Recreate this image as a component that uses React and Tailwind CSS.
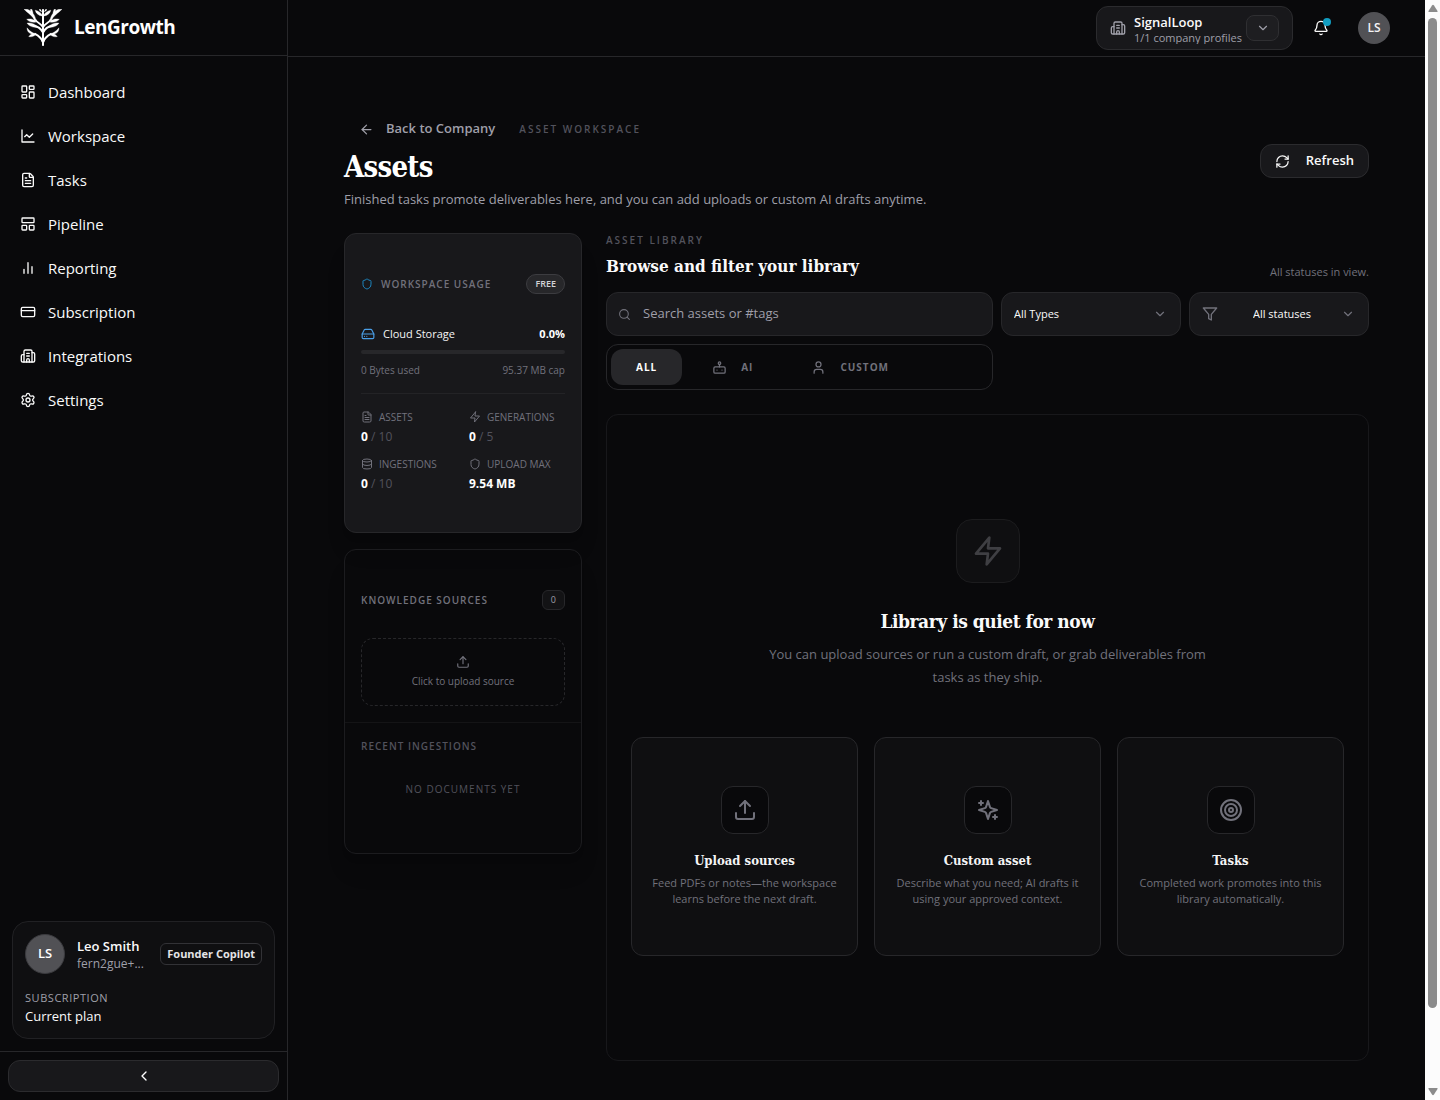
import React, { useState } from 'react';
import {
  ArrowLeft, Bell, Building2, ChevronDown, ChevronLeft, CreditCard, Database, FileText,
  HardDrive, LayoutDashboard, LayoutPanelTop, RefreshCw, Search, Settings, Shield, Target, Upload, User,
} from 'lucide-react';

// Shared wrapper for the icons that lucide does not ship in this shape
function Glyph({ size = 16, strokeWidth = 2, className, children }) {
  return (
    <svg
      width={size}
      height={size}
      viewBox="0 0 24 24"
      fill="none"
      stroke="currentColor"
      strokeWidth={strokeWidth}
      strokeLinecap="round"
      strokeLinejoin="round"
      className={className}
      aria-hidden="true"
    >
      {children}
    </svg>
  );
}

const LineChart = (props) => (
  <Glyph {...props}>
    <path d="M3 3v18h18" />
    <path d="m19 9-5 5-4-4-3 3" />
  </Glyph>
);

const Bars = (props) => (
  <Glyph {...props}>
    <path d="M18 20V10M12 20V4M6 20v-6" />
  </Glyph>
);

const Zap = (props) => (
  <Glyph {...props}>
    <path d="M13 2 3 14h9l-1 8 10-12h-9l1-8z" />
  </Glyph>
);

const Filter = (props) => (
  <Glyph {...props}>
    <path d="M22 3H2l8 9.460V19l4 2v-8.540L22 3z" />
  </Glyph>
);

const Robot = (props) => (
  <Glyph {...props}>
    <rect width="18" height="10" x="3" y="11" rx="2" />
    <circle cx="12" cy="5" r="2" />
    <path d="M12 7v4M8 16h.01M16 16h.01" />
  </Glyph>
);

const Sparkles = (props) => (
  <Glyph {...props}>
    <path d="m12 3-1.912 5.813a2 2 0 0 1-1.275 1.275L3 12l5.813 1.912a2 2 0 0 1 1.275 1.275L12 21l1.912-5.813a2 2 0 0 1 1.275-1.275L21 12l-5.813-1.912a2 2 0 0 1-1.275-1.275L12 3Z" />
    <path d="M5 3v4M19 17v4M3 5h4M17 19h4" />
  </Glyph>
);

function Logo() {
  const half = (
    <>
      <path d="M55 97C52 86 44 79 32 73" strokeWidth="6" />
      <path d="M34 71C26 70 18 74 14 81C23 83 31 79 36 74Z" fill="currentColor" strokeWidth="1" />
      <path d="M37 75C28 71 17 66 9 55C9 65 13 71 23 73Z" fill="currentColor" strokeWidth="1" />
      <path d="M55 68C50 55 38 50 26 48" strokeWidth="6" />
      <path d="M40 54C30 54 15 52 9 41C20 39 31 43 38 50Z" fill="currentColor" strokeWidth="1" />
      <path d="M55 52C50 42 38 41 33 30" strokeWidth="5" />
      <path d="M36 38C26 40 14 37 8 30C17 27 26 29 33 34Z" fill="currentColor" strokeWidth="1" />
      <path d="M31 35C28 20 12 13 0 0H10C22 5 32 15 35 32Z" fill="currentColor" strokeWidth="1" />
      <path d="M24 14C20 10 19 5 19 0H23C25 5 27 9 26 13Z" fill="currentColor" strokeWidth="1" />
      <path d="M53 20C43 19 35 12 33 3C43 5 51 11 54 18Z" fill="currentColor" strokeWidth="1" />
      <path d="M44 0H49L53 8C48 7 45 4 44 0Z" fill="currentColor" strokeWidth="0" />
    </>
  );
  return (
    <svg width="38" height="37" viewBox="0 0 112 108" fill="none" stroke="currentColor" aria-hidden="true">
      <g>{half}</g>
      <g transform="translate(112 0) scale(-1 1)">{half}</g>
      <path d="M56 0V108" strokeWidth="6" />
    </svg>
  );
}

const navItems = [
  { label: 'Dashboard', icon: LayoutDashboard },
  { label: 'Workspace', icon: LineChart },
  { label: 'Tasks', icon: FileText },
  { label: 'Pipeline', icon: LayoutPanelTop },
  { label: 'Reporting', icon: Bars },
  { label: 'Subscription', icon: CreditCard },
  { label: 'Integrations', icon: Building2 },
  { label: 'Settings', icon: Settings },
];

const usageStats = [
  { label: 'ASSETS', icon: FileText, value: '0', cap: '10' },
  { label: 'GENERATIONS', icon: Zap, value: '0', cap: '5' },
  { label: 'INGESTIONS', icon: Database, value: '0', cap: '10' },
  { label: 'UPLOAD MAX', icon: Shield, value: '9.54 MB' },
];

const starters = [
  { title: 'Upload sources', icon: Upload, text: 'Feed PDFs or notes—the workspace learns before the next draft.' },
  { title: 'Custom asset', icon: Sparkles, text: 'Describe what you need; AI drafts it using your approved context.' },
  { title: 'Tasks', icon: Target, text: 'Completed work promotes into this library automatically.' },
];

const tabs = [
  { id: 'all', label: 'ALL' },
  { id: 'ai', label: 'AI', icon: Robot },
  { id: 'custom', label: 'CUSTOM', icon: User },
];

function Sidebar() {
  return (
    <aside className="sticky top-0 flex h-screen w-72 shrink-0 flex-col border-r border-[#27272a]">
      <div className="flex h-14 items-center gap-3 border-b border-[#27272a] pl-6 text-white">
        <Logo />
        <span className="text-[19px] font-bold tracking-tight">LenGrowth</span>
      </div>

      <nav className="flex flex-1 flex-col gap-1 px-2 py-4">
        {navItems.map(({ label, icon: Icon }) => (
          <a key={label} href="#" className="flex h-10 items-center gap-3 px-3 text-[15px] font-medium text-zinc-50">
            <Icon size={16} />
            {label}
          </a>
        ))}
      </nav>

      <div className="mx-3 mb-3 rounded-2xl border border-[#212124] bg-[#0f0f11] p-3">
        <div className="flex items-center gap-3">
          <div className="flex size-10 shrink-0 items-center justify-center rounded-full border border-[#3a3a3e] bg-[#515155] text-[13px] font-semibold text-white">
            LS
          </div>
          <div className="min-w-0 flex-1">
            <p className="text-[13px] leading-5 font-semibold whitespace-nowrap text-zinc-50">Leo Smith</p>
            <p className="text-xs leading-4 text-zinc-400">fern2gue+...</p>
          </div>
          <span className="shrink-0 rounded-md border border-[#323236] px-1.5 text-[11px] leading-5 font-bold text-zinc-200">
            Founder Copilot
          </span>
        </div>
        <p className="mt-4 text-[11px] leading-4 tracking-wider text-zinc-400">SUBSCRIPTION</p>
        <p className="text-[13px] leading-5 font-medium text-zinc-50">Current plan</p>
      </div>

      <div className="border-t border-[#27272a] p-2">
        <button
          type="button"
          aria-label="Collapse sidebar"
          className="flex h-8 w-full items-center justify-center rounded-xl border border-[#2b2b2e] bg-[#18181b] text-white"
        >
          <ChevronLeft size={16} />
        </button>
      </div>
    </aside>
  );
}

function TopBar() {
  return (
    <header className="flex h-[57px] items-center justify-end border-b border-[#27272a] pr-[35px]">
      <div className="flex h-11 items-center rounded-xl border border-[#2b2b2e] bg-[#18181b] px-[13px]">
        <Building2 size={16} className="mr-2 text-zinc-400" />
        <div className="h-8 overflow-hidden">
          <p className="text-[13px] leading-5 font-semibold text-zinc-50">SignalLoop</p>
          <p className="text-[11px] leading-3 text-zinc-400">1/1 company profiles</p>
        </div>
        <button
          type="button"
          aria-label="Switch company"
          className="ml-1 flex h-[26px] w-[33px] items-center justify-center rounded-lg border border-[#2f2f32] bg-[#1e1e21] text-zinc-400"
        >
          <ChevronDown size={14} />
        </button>
      </div>
      <button type="button" aria-label="Notifications" className="relative ml-5 text-zinc-50">
        <Bell size={16} />
        <span className="absolute -top-0.5 -right-0.5 size-2 rounded-full bg-[#119cc0]" />
      </button>
      <button
        type="button"
        className="ml-[29px] flex size-8 items-center justify-center rounded-full bg-[#515155] text-xs font-semibold text-zinc-100"
      >
        LS
      </button>
    </header>
  );
}

function UsageCard() {
  return (
    <section className="rounded-xl border border-[#27272a] bg-[#18181b] px-4 py-10 shadow-xl">
      <div className="flex h-5 items-center">
        <Shield size={12} className="text-[#1d86c0]" />
        <h2 className="ml-2 text-[10px] font-semibold tracking-[1px] text-zinc-500">WORKSPACE USAGE</h2>
        <span className="ml-auto rounded-full border border-[#3c3c40] bg-[#27272a] px-2 text-[9px] leading-[18px] font-semibold text-zinc-300">
          FREE
        </span>
      </div>

      <div className="mt-8 flex h-4 items-center text-[11px] text-white">
        <HardDrive size={14} className="mr-2 text-[#4a9fe8]" />
        <span className="font-medium text-zinc-100">Cloud Storage</span>
        <span className="ml-auto font-bold">0.0%</span>
      </div>
      <div className="mt-2 h-1 rounded-full bg-[#27272a]" />
      <div className="mt-2 flex justify-between text-[10px] leading-4 text-zinc-500">
        <span>0 Bytes used</span>
        <span>95.37 MB cap</span>
      </div>

      <div className="mt-[15px] grid grid-cols-2 gap-x-3 gap-y-[11px] border-t border-[#232326] pt-[15px]">
        {usageStats.map(({ label, icon: Icon, value, cap }) => (
          <div key={label}>
            <p className="flex items-center gap-1.5 text-[10px] leading-4 font-medium whitespace-nowrap text-zinc-500">
              <Icon size={12} />
              {label}
            </p>
            <p className="mt-1 text-xs leading-4 font-bold text-white">
              {value}
              {cap && <span className="font-normal text-zinc-600"> / {cap}</span>}
            </p>
          </div>
        ))}
      </div>
    </section>
  );
}

function SourcesCard() {
  return (
    <section className="rounded-xl border border-[#1c1c1f] shadow-xl">
      <div className="px-4 pt-10 pb-4">
        <div className="flex h-5 items-center justify-between">
          <h2 className="text-[10px] font-semibold tracking-[1px] text-zinc-500">KNOWLEDGE SOURCES</h2>
          <span className="rounded-md border border-[#27272a] bg-[#131315] px-2 text-[9px] leading-[18px] text-zinc-400">0</span>
        </div>
        <button
          type="button"
          className="mt-7 flex h-[68px] w-full flex-col items-center justify-center gap-1 rounded-xl border border-dashed border-[#27272a] text-[10px] leading-4 text-zinc-500"
        >
          <Upload size={14} />
          Click to upload source
        </button>
      </div>
      <div className="border-t border-[#141416] px-4 pt-4 pb-14">
        <h2 className="text-[10px] leading-[15px] font-semibold tracking-[1px] text-zinc-600">RECENT INGESTIONS</h2>
        <p className="mt-7 text-center text-[10px] leading-[15px] tracking-[1px] text-zinc-600">NO DOCUMENTS YET</p>
      </div>
    </section>
  );
}

function Filters() {
  const [tab, setTab] = useState('all');
  return (
    <div className="mt-3 grid grid-cols-[1fr_180px_180px] gap-2">
      <label className="flex h-11 items-center gap-3 rounded-xl border border-[#27272a] bg-[#18181b] px-[11px]">
        <Search size={13} className="text-zinc-500" />
        <input
          type="text"
          aria-label="Search assets"
          placeholder="Search assets or #tags"
          className="min-w-0 flex-1 bg-transparent text-[13px] text-zinc-50 outline-none placeholder:text-zinc-400"
        />
      </label>
      <div className="relative">
        <select
          aria-label="Type"
          className="h-11 w-full appearance-none rounded-xl border border-[#27272a] bg-[#18181b] px-3 text-[11px] font-medium text-zinc-50"
        >
          <option>All Types</option>
        </select>
        <ChevronDown size={14} className="pointer-events-none absolute top-[15px] right-3.5 text-zinc-500" />
      </div>
      <div className="relative">
        <Filter size={16} className="pointer-events-none absolute top-3.5 left-[13px] text-zinc-500" />
        <select
          aria-label="Status"
          className="h-11 w-full appearance-none rounded-xl border border-[#27272a] bg-[#18181b] pr-8 pl-[63px] text-[11px] font-medium text-zinc-50"
        >
          <option>All statuses</option>
        </select>
        <ChevronDown size={14} className="pointer-events-none absolute top-[15px] right-3.5 text-zinc-500" />
      </div>

      <div className="flex h-[46px] items-center rounded-xl border border-[#27272a] p-1">
        {tabs.map(({ id, label, icon: Icon }) => (
          <button
            key={id}
            type="button"
            onClick={() => setTab(id)}
            className={`flex h-9 items-center gap-3.5 rounded-xl text-[10px] font-bold tracking-[1px] ${
              Icon ? 'pr-7 pl-[30px]' : 'px-[25px]'
            } ${tab === id ? 'bg-[#27272a] text-white' : 'text-zinc-500'}`}
          >
            {Icon && <Icon size={15} />}
            {label}
          </button>
        ))}
      </div>
    </div>
  );
}

function EmptyLibrary() {
  return (
    <section className="mt-6 rounded-xl border border-[#18181b] px-6 py-[104px]">
      <div className="flex flex-col items-center text-center">
        <div className="flex size-16 items-center justify-center rounded-2xl border border-[#1c1c1e] bg-[#0f0f11] text-[#3f3f43]">
          <Zap size={32} />
        </div>
        <h2 className="mt-6 font-['DejaVu_Serif_Condensed','DejaVu_Serif',serif] text-[19px] leading-7 font-bold tracking-tight text-zinc-50">
          Library is quiet for now
        </h2>
        <p className="mt-2 max-w-[450px] text-[13px] leading-[23px] text-zinc-500">
          You can upload sources or run a custom draft, or grab deliverables from tasks as they ship.
        </p>
      </div>
      <div className="mt-12 grid grid-cols-3 gap-4">
        {starters.map(({ title, icon: Icon, text }) => (
          <button
            key={title}
            type="button"
            className="flex flex-col items-center rounded-xl border border-[#27272a] bg-[#0f0f11] px-5 py-12 text-center"
          >
            <span className="flex size-12 items-center justify-center rounded-xl border border-[#27272a] bg-[#09090b] text-zinc-500">
              <Icon size={24} />
            </span>
            <span className="mt-4 font-['DejaVu_Serif_Condensed','DejaVu_Serif',serif] text-[13px] leading-[21px] font-bold text-zinc-100">
              {title}
            </span>
            <span className="mt-1 text-[11px] leading-4 text-zinc-500">{text}</span>
          </button>
        ))}
      </div>
    </section>
  );
}

function ScrollTrack() {
  return (
    <div className="sticky top-0 flex h-screen w-[15px] shrink-0 flex-col items-center bg-[#fcfcfc] py-1" aria-hidden="true">
      <svg width="10" height="8" viewBox="0 0 10 8" fill="#8b8b8b">
        <path d="M4 1.5Q5 0 6 1.5L9.500 7Q10 8 9 8H1Q0 8 .5 7Z" />
      </svg>
      <div className="mt-1.5 mb-20 w-[9px] flex-1 rounded-full bg-[#8b8b8b]" />
      <svg width="10" height="8" viewBox="0 0 10 8" fill="#8b8b8b">
        <path d="M4 6.500Q5 8 6 6.500L9.500 1Q10 0 9 0H1Q0 0 .5 1Z" />
      </svg>
    </div>
  );
}

export default function App() {
  return (
    <div className="flex min-h-screen bg-[#09090b] font-['Open_Sans','Noto_Sans',sans-serif] text-zinc-50">
      <Sidebar />
      <div className="min-w-0 flex-1">
        <TopBar />
        <main className="px-14 pt-14 pb-9">
          <div className="flex items-center justify-between">
            <div>
              <div className="flex h-8 items-center">
                <a href="#" className="flex items-center gap-3 pr-4 pl-[15px] text-[13px] font-semibold text-zinc-400">
                  <ArrowLeft size={15} />
                  Back to Company
                </a>
                <span className="ml-2 text-[10px] font-semibold tracking-[2px] text-zinc-600">ASSET WORKSPACE</span>
              </div>
              <h1 className="mt-1 font-['DejaVu_Serif_Condensed','DejaVu_Serif',serif] text-[29px] leading-9 font-bold tracking-tight text-white">
                Assets
              </h1>
              <p className="mt-1 text-[13px] leading-5 text-zinc-400">
                Finished tasks promote deliverables here, and you can add uploads or custom AI drafts anytime.
              </p>
            </div>
            <button
              type="button"
              className="flex h-[34px] items-center gap-4 rounded-xl border border-[#2b2b2e] bg-[#18181b] px-3.5 text-[13px] font-semibold text-zinc-50"
            >
              <RefreshCw size={15} />
              Refresh
            </button>
          </div>

          <div className="mt-6 grid grid-cols-[238px_1fr] items-start gap-6">
            <div className="flex flex-col gap-4">
              <UsageCard />
              <SourcesCard />
            </div>
            <div className="min-w-0">
              <div className="flex items-end justify-between">
                <div>
                  <p className="text-[10px] leading-[15px] font-semibold tracking-[2px] text-zinc-600">ASSET LIBRARY</p>
                  <h2 className="mt-1 font-['DejaVu_Serif_Condensed','DejaVu_Serif',serif] text-[17px] leading-7 font-bold text-zinc-50">
                    Browse and filter your library
                  </h2>
                </div>
                <p className="text-[11px] leading-4 text-zinc-500">All statuses in view.</p>
              </div>
              <Filters />
              <EmptyLibrary />
            </div>
          </div>
        </main>
      </div>
      <ScrollTrack />
    </div>
  );
}
